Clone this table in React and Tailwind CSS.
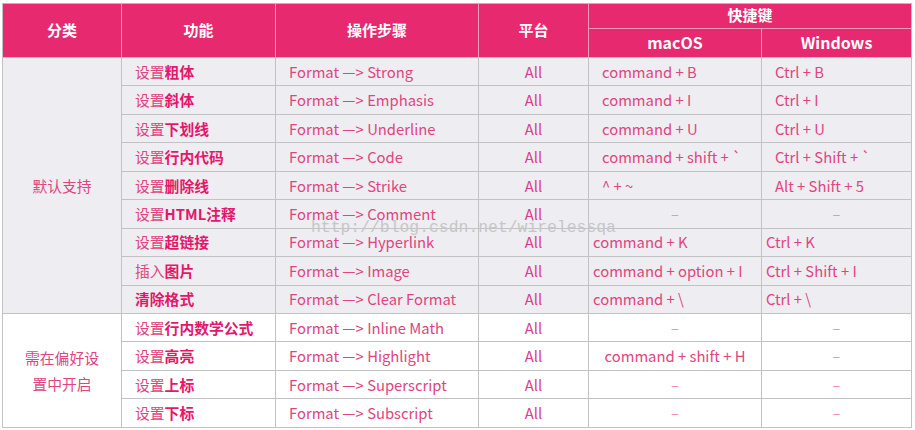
import React from "react";

const N = "text-[#e0457f]";
const B = "font-bold text-[#e5176b]";

const rows = [
  { a: "设置", b: "粗体", op: "Strong", mac: "command + B", win: "Ctrl + B", m: "l", w: "l" },
  { a: "设置", b: "斜体", op: "Emphasis", mac: "command + I", win: "Ctrl + I", m: "l", w: "l" },
  { a: "设置", b: "下划线", op: "Underline", mac: "command + U", win: "Ctrl + U", m: "l", w: "l" },
  { a: "设置", b: "行内代码", op: "Code", mac: "command + shift + `", win: "Ctrl + Shift + `", m: "l", w: "l" },
  { a: "设置", b: "删除线", op: "Strike", mac: "^ + ~", win: "Alt + Shift + 5", m: "l", w: "l" },
  { a: "设置", b: "HTML注释", op: "Comment", mac: "–", win: "–", m: "c", w: "c" },
  { a: "设置", b: "超链接", op: "Hyperlink", mac: "command + K", win: "Ctrl + K", m: "s", w: "s" },
  { a: "插入", b: "图片", op: "Image", mac: "command + option + I", win: "Ctrl + Shift + I", m: "s", w: "s" },
  { a: "", b: "清除格式", op: "Clear Format", mac: "command + \\", win: "Ctrl + \\", m: "s", w: "s" },
  { a: "设置", b: "行内数学公式", op: "Inline Math", mac: "–", win: "–", m: "c", w: "c" },
  { a: "设置", b: "高亮", op: "Highlight", mac: "command + shift + H", win: "–", m: "c", w: "c" },
  { a: "设置", b: "上标", op: "Superscript", mac: "–", win: "–", m: "c", w: "c" },
  { a: "设置", b: "下标", op: "Subscript", mac: "–", win: "–", m: "c", w: "c" },
];

const alignCls = (k) => {
  if (k === "l") return "text-left pl-[13px]";
  if (k === "s") return "text-left pl-[4px]";
  return "text-center";
};

const cell = "border border-[#c2c2c2] p-0 pt-[1px] align-middle whitespace-nowrap";

export default function App() {
  return (
    <div
      className="relative w-[915px] h-[430px] bg-white text-[14.8px] leading-none"
      style={{ fontFamily: '"Noto Sans CJK SC", "Noto Sans", sans-serif' }}
    >
      <div className="pt-[3px] pl-[2px]">
        <table className="table-fixed border-collapse w-[909px]">
          <colgroup>
            <col className="w-[119px]" />
            <col className="w-[154px]" />
            <col className="w-[203px]" />
            <col className="w-[110px]" />
            <col className="w-[173px]" />
            <col className="w-[150px]" />
          </colgroup>
          <thead>
            <tr className="h-[25px] bg-[#e7296f] text-white font-bold">
              <th rowSpan={2} className="border-x border-t border-[#f29abd] border-b border-b-[#c2c2c2] border-l-[#c2c2c2] p-0 pb-[3px] text-[15px]">分类</th>
              <th rowSpan={2} className="border-x border-t border-[#f29abd] border-b border-b-[#c2c2c2] p-0 pb-[3px] text-[15px]">功能</th>
              <th rowSpan={2} className="border-x border-t border-[#f29abd] border-b border-b-[#c2c2c2] p-0 pb-[3px] text-[15px]">操作步骤</th>
              <th rowSpan={2} className="border-x border-t border-[#f29abd] border-b border-b-[#c2c2c2] p-0 pb-[3px] text-[15px]">平台</th>
              <th colSpan={2} className="border border-[#f29abd] border-r-[#c2c2c2] p-0 pb-[3px] text-[15px]">快捷键</th>
            </tr>
            <tr className="h-[29px] bg-[#e7296f] text-white font-bold">
              <th className="border border-[#f29abd] border-b-[#c2c2c2] p-0 pb-[2px] text-[16px]">macOS</th>
              <th className="border border-[#f29abd] border-b-[#c2c2c2] border-r-[#c2c2c2] p-0 pb-[2px] text-[16px]">Windows</th>
            </tr>
          </thead>
          <tbody>
            {rows.map((r, i) => {
              const g1 = i < 9;
              const bg = g1 ? "bg-[#eeedf2]" : "bg-white";
              return (
                <tr key={i} className={`h-[28.44px] ${bg}`}>
                  {i === 0 && (
                    <td rowSpan={9} className={`${cell} text-center ${N}`}>默认支持</td>
                  )}
                  {i === 9 && (
                    <td rowSpan={4} className={`${cell} text-center ${N} whitespace-normal leading-[26px]`}>
                      需在偏好设<br />置中开启
                    </td>
                  )}
                  <td className={`${cell} text-left pl-[13px]`}>
                    {r.a && <span className={N}>{r.a}</span>}
                    <span className={B}>{r.b}</span>
                  </td>
                  <td className={`${cell} text-left pl-[13px] ${N}`}>Format —&gt; {r.op}</td>
                  <td className={`${cell} text-center text-[#d8428a]`}>All</td>
                  <td className={`${cell} ${alignCls(r.m)} ${r.mac === "–" ? "text-[#f090b2]" : N}`}>{r.mac}</td>
                  <td className={`${cell} ${alignCls(r.w)} ${r.win === "–" ? "text-[#f090b2]" : N}`}>{r.win}</td>
                </tr>
              );
            })}
          </tbody>
        </table>
      </div>
      <div
        className="absolute left-[311px] top-[220px] text-[16.4px] leading-[16px] text-[#c6c6c6] pointer-events-none"
        style={{ fontFamily: '"Liberation Mono", monospace' }}
      >
        http://blog.csdn.net/wirelessqa
      </div>
    </div>
  );
}
